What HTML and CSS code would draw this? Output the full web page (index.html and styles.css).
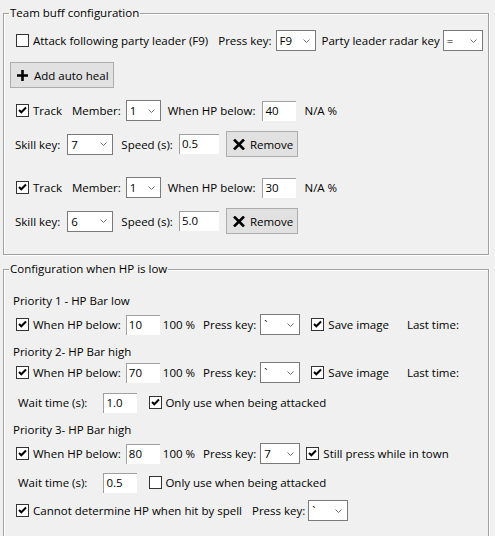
FILE: index.html
```html
<!DOCTYPE html>
<html>
<head>
<meta charset="utf-8">
<link rel="stylesheet" href="styles.css">
</head>
<body>
<fieldset class="group group-team">
  <legend>Team buff configuration</legend>

  <div class="row r1">
    <span class="check"></span>
    <span class="lbl ml4">Attack following party leader (F9)</span>
    <span class="lbl ml10">Press key:</span>
    <div class="combo w40 ml4"><span class="val">F9</span><svg class="chev" width="7" height="4" viewBox="0 0 7 4"><path d="M0.5 0.5 L3.5 3.5 L6.5 0.5"/></svg></div>
    <span class="lbl ml6">Party leader radar key</span>
    <div class="combo w40 ml3"><span class="val">=</span><svg class="chev" width="7" height="4" viewBox="0 0 7 4"><path d="M0.5 0.5 L3.5 3.5 L6.5 0.5"/></svg></div>
  </div>

  <div class="row tall r2">
    <button class="btn btn-add"><svg class="ico" width="11" height="11" viewBox="0 0 11 11"><path d="M5.5 0 V11 M0 5.5 H11"/></svg><span>Add auto heal</span></button>
  </div>

  <div class="row r3">
    <span class="check on"><svg width="11" height="11" viewBox="0 0 11 11"><path d="M2 5 L4.3 7.3 L9 2.5"/></svg></span>
    <span class="lbl ml4">Track</span>
    <span class="lbl ml10">Member:</span>
    <div class="combo w35 ml5"><span class="val">1</span><svg class="chev" width="7" height="4" viewBox="0 0 7 4"><path d="M0.5 0.5 L3.5 3.5 L6.5 0.5"/></svg></div>
    <span class="lbl ml7">When HP below:</span>
    <div class="field w34 ml7">40</div>
    <span class="lbl ml8">N/A %</span>
  </div>

  <div class="row tall r4">
    <span class="lbl mln1">Skill key:</span>
    <div class="combo w46 ml7"><span class="val">7</span><svg class="chev" width="7" height="4" viewBox="0 0 7 4"><path d="M0.5 0.5 L3.5 3.5 L6.5 0.5"/></svg></div>
    <span class="lbl ml8">Speed (s):</span>
    <div class="field w40 ml6">0.5</div>
    <button class="btn btn-remove ml7"><svg class="ico" width="12" height="11" viewBox="0 0 12 11"><path d="M1 0.5 L11 10.5 M11 0.5 L1 10.5"/></svg><span>Remove</span></button>
  </div>

  <div class="row r5">
    <span class="check on"><svg width="11" height="11" viewBox="0 0 11 11"><path d="M2 5 L4.3 7.3 L9 2.5"/></svg></span>
    <span class="lbl ml4">Track</span>
    <span class="lbl ml10">Member:</span>
    <div class="combo w35 ml5"><span class="val">1</span><svg class="chev" width="7" height="4" viewBox="0 0 7 4"><path d="M0.5 0.5 L3.5 3.5 L6.5 0.5"/></svg></div>
    <span class="lbl ml7">When HP below:</span>
    <div class="field w34 ml7">30</div>
    <span class="lbl ml8">N/A %</span>
  </div>

  <div class="row tall r6">
    <span class="lbl mln1">Skill key:</span>
    <div class="combo w46 ml7"><span class="val">6</span><svg class="chev" width="7" height="4" viewBox="0 0 7 4"><path d="M0.5 0.5 L3.5 3.5 L6.5 0.5"/></svg></div>
    <span class="lbl ml8">Speed (s):</span>
    <div class="field w40 ml6">5.0</div>
    <button class="btn btn-remove ml7"><svg class="ico" width="12" height="11" viewBox="0 0 12 11"><path d="M1 0.5 L11 10.5 M11 0.5 L1 10.5"/></svg><span>Remove</span></button>
  </div>
</fieldset>

<fieldset class="group group-hp">
  <legend>Configuration when HP is low</legend>

  <div class="heading h1">Priority 1 - HP Bar low</div>
  <div class="row a1">
    <span class="check on"><svg width="11" height="11" viewBox="0 0 11 11"><path d="M2 5 L4.3 7.3 L9 2.5"/></svg></span>
    <span class="lbl ml4">When HP below:</span>
    <div class="field w34 ml5">10</div>
    <span class="lbl ml3">100 %</span>
    <span class="lbl ml8">Press key:</span>
    <div class="combo w40 ml4"><span class="val">`</span><svg class="chev" width="7" height="4" viewBox="0 0 7 4"><path d="M0.5 0.5 L3.5 3.5 L6.5 0.5"/></svg></div>
    <span class="check on ml11"><svg width="11" height="11" viewBox="0 0 11 11"><path d="M2 5 L4.3 7.3 L9 2.5"/></svg></span>
    <span class="lbl ml4">Save image</span>
    <span class="lbl ml18">Last time:</span>
  </div>

  <div class="heading h2">Priority 2- HP Bar high</div>
  <div class="row a2">
    <span class="check on"><svg width="11" height="11" viewBox="0 0 11 11"><path d="M2 5 L4.3 7.3 L9 2.5"/></svg></span>
    <span class="lbl ml4">When HP below:</span>
    <div class="field w34 ml5">70</div>
    <span class="lbl ml3">100 %</span>
    <span class="lbl ml8">Press key:</span>
    <div class="combo w40 ml4"><span class="val">`</span><svg class="chev" width="7" height="4" viewBox="0 0 7 4"><path d="M0.5 0.5 L3.5 3.5 L6.5 0.5"/></svg></div>
    <span class="check on ml11"><svg width="11" height="11" viewBox="0 0 11 11"><path d="M2 5 L4.3 7.3 L9 2.5"/></svg></span>
    <span class="lbl ml4">Save image</span>
    <span class="lbl ml18">Last time:</span>
  </div>
  <div class="row wait w1">
    <span class="lbl">Wait time (s):</span>
    <div class="field w34 ml16">1.0</div>
    <span class="check on ml12"><svg width="11" height="11" viewBox="0 0 11 11"><path d="M2 5 L4.3 7.3 L9 2.5"/></svg></span>
    <span class="lbl ml3">Only use when being attacked</span>
  </div>

  <div class="heading h3">Priority 3- HP Bar high</div>
  <div class="row a3">
    <span class="check on"><svg width="11" height="11" viewBox="0 0 11 11"><path d="M2 5 L4.3 7.3 L9 2.5"/></svg></span>
    <span class="lbl ml4">When HP below:</span>
    <div class="field w34 ml5">80</div>
    <span class="lbl ml3">100 %</span>
    <span class="lbl ml8">Press key:</span>
    <div class="combo w40 ml4"><span class="val">7</span><svg class="chev" width="7" height="4" viewBox="0 0 7 4"><path d="M0.5 0.5 L3.5 3.5 L6.5 0.5"/></svg></div>
    <span class="check on ml6"><svg width="11" height="11" viewBox="0 0 11 11"><path d="M2 5 L4.3 7.3 L9 2.5"/></svg></span>
    <span class="lbl ml4">Still press while in town</span>
  </div>
  <div class="row wait w2">
    <span class="lbl">Wait time (s):</span>
    <div class="field w34 ml16">0.5</div>
    <span class="check ml12"></span>
    <span class="lbl ml3">Only use when being attacked</span>
  </div>

  <div class="row last">
    <span class="check on"><svg width="11" height="11" viewBox="0 0 11 11"><path d="M2 5 L4.3 7.3 L9 2.5"/></svg></span>
    <span class="lbl ml4">Cannot determine HP when hit by spell</span>
    <span class="lbl ml10">Press key:</span>
    <div class="combo w40 ml3"><span class="val">`</span><svg class="chev" width="7" height="4" viewBox="0 0 7 4"><path d="M0.5 0.5 L3.5 3.5 L6.5 0.5"/></svg></div>
  </div>
</fieldset>
</body>
</html>
```

FILE: styles.css
```css
html, body {
  margin: 0;
  padding: 0;
  background: #f0f0f0;
}
body {
  font-family: "Open Sans", "Noto Sans", Arial, sans-serif;
  font-size: 11.5px;
  color: #000;
  padding-left: 3px;
}
.group {
  box-sizing: border-box;
  width: 486px;
  margin: 0;
  border: 1px solid #a0a0a0;
  box-shadow: inset 1px 1px 0 #fff, 1px 1px 0 #fff;
  min-inline-size: 0;
}
.group legend {
  padding: 0 1px;
  margin-left: -7px;
  line-height: 14px;
  height: 14px;
}
.group-team {
  margin-top: 6px;
  padding: 0 0 20px 12px;
}
.group-hp {
  margin-top: 7px;
  padding: 0 0 16px 12px;
}
.row {
  display: flex;
  align-items: center;
  height: 21px;
  white-space: nowrap;
}
.row.tall { height: 26px; }
.lbl { line-height: 15px; }
.heading {
  line-height: 15px;
  height: 15px;
  margin-left: -3px;
}

/* buttons (base) */
.btn {
  box-sizing: border-box;
  flex: none;
  height: 26px;
  border: 1px solid #adadad;
  background: #e1e1e1;
  font: inherit;
  color: #000;
  display: flex;
  align-items: center;
  padding: 0;
}
.btn .ico path {
  fill: none;
  stroke: #000;
  stroke-width: 2.6;
}
.btn-add {
  width: 104px;
  margin-left: -6px;
  padding-left: 6px;
  gap: 6px;
}
.btn-remove {
  width: 72px;
  padding-left: 6px;
  gap: 5px;
}

/* vertical rhythm, team group */
.r1 { margin-top: 10px; }
.r2 { margin-top: 11px; }
.r3 { margin-top: 12px; }
.r4 { margin-top: 10px; }
.r5 { margin-top: 20px; }
.r6 { margin-top: 10px; }

/* vertical rhythm, hp group */
.h1 { margin-top: 17px; }
.a1 { margin-top: 6px; }
.h2 { margin-top: 9px; }
.a2 { margin-top: 3px; }
.w1 { margin-top: 9px; }
.h3 { margin-top: 9px; }
.a3 { margin-top: 6px; }
.w2 { margin-top: 8px; }
.last { margin-top: 7px; }
.wait { padding-left: 2px; }

/* spacing helpers */
.ml3 { margin-left: 3px; }
.ml4 { margin-left: 4px; }
.ml5 { margin-left: 5px; }
.ml6 { margin-left: 6px; }
.ml7 { margin-left: 7px; }
.ml8 { margin-left: 8px; }
.ml10 { margin-left: 10px; }
.ml11 { margin-left: 11px; }
.ml12 { margin-left: 12px; }
.ml16 { margin-left: 16px; }
.ml18 { margin-left: 18px; }
.mln1 { margin-left: -1px; }

.w34 { width: 34px; }
.w35 { width: 35px; }
.w40 { width: 40px; }
.w46 { width: 46px; }

/* checkbox */
.check {
  box-sizing: border-box;
  flex: none;
  width: 13px;
  height: 13px;
  border: 1px solid #333;
  background: #fff;
  display: flex;
}
.check svg path {
  fill: none;
  stroke: #000;
  stroke-width: 2;
}

/* combobox */
.combo {
  box-sizing: border-box;
  flex: none;
  height: 21px;
  border: 1px solid #7a7a7a;
  background: #fff;
  display: flex;
  align-items: center;
  justify-content: space-between;
  padding: 0 5px 0 3px;
}
.combo .val { line-height: 15px; }
.chev path {
  fill: none;
  stroke: #707070;
  stroke-width: 1;
}

/* text box */
.field {
  box-sizing: border-box;
  flex: none;
  height: 20px;
  background: #fff;
  border-top: 1px solid #a0a0a0;
  border-left: 1px solid #a0a0a0;
  padding-left: 2px;
  line-height: 18px;
}
```
